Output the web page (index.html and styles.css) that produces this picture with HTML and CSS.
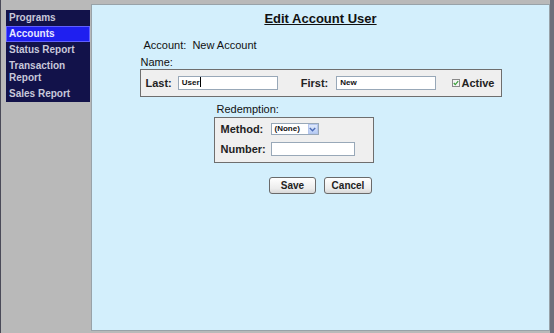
FILE: index.html
```html
<!DOCTYPE html>
<html>
<head>
<meta charset="utf-8">
<link rel="stylesheet" href="styles.css">
</head>
<body>
<div class="frame">
  <nav class="sidebar">
    <ul class="menu">
      <li class="item">Programs</li>
      <li class="item active">Accounts</li>
      <li class="item">Status Report</li>
      <li class="item">Transaction Report</li>
      <li class="item">Sales Report</li>
    </ul>
  </nav>
  <main class="main">
    <h1 class="title">Edit Account User</h1>
    <div class="form">
      <div class="account">Account:&nbsp; New Account</div>
      <div class="group-label">Name:</div>
      <div class="box name-box">
        <span class="lbl">Last:</span>
        <span class="field w100">User<span class="caret"></span></span>
        <span class="lbl first-lbl">First:</span>
        <span class="field w100">New</span>
        <span class="check-wrap">
          <svg class="check" width="8" height="8" viewBox="0 0 8 8">
            <rect x="0.5" y="0.5" width="7" height="7" fill="#f4f4f4" stroke="#8a8a8a"/>
            <path d="M1.8 4 L3.3 5.6 L6.2 2.2" fill="none" stroke="#3aa03a" stroke-width="1.2"/>
          </svg>
          <span class="lbl">Active</span>
        </span>
      </div>
      <div class="redemption">
        <div class="group-label">Redemption:</div>
        <div class="box red-box">
          <div class="row">
            <span class="lbl rlbl">Method:</span>
            <span class="select">
              <span class="sel-text">(None)</span>
              <span class="sel-btn">
                <svg width="7" height="5" viewBox="0 0 7 5"><path d="M0.8 1 L3.5 3.8 L6.2 1" fill="none" stroke="#4d6db8" stroke-width="1.4"/></svg>
              </span>
            </span>
          </div>
          <div class="row">
            <span class="lbl rlbl">Number:</span>
            <span class="field w84"></span>
          </div>
        </div>
      </div>
      <div class="buttons">
        <button class="btn">Save</button>
        <button class="btn cancel">Cancel</button>
      </div>
    </div>
  </main>
</div>
</body>
</html>
```
FILE: styles.css
```css
* { box-sizing: border-box; }
html, body { margin: 0; padding: 0; }
body {
  background: #b9b9b9;
  font-family: "Liberation Sans", Arial, sans-serif;
  width: 554px;
  height: 333px;
  overflow: hidden;
}
.frame {
  display: flex;
  height: 333px;
  padding-top: 4px;
  padding-bottom: 2px;
  border-left: 1px solid #4a4a58;
  border-right: 4px solid #6e6e7c;
}
.sidebar {
  width: 90px;
  flex: none;
  padding: 6px 0 0 5px;
}
.menu {
  list-style: none;
  margin: 0;
  padding: 0;
  width: 84px;
  background: #12124a;
}
.item {
  font-size: 10px;
  font-weight: bold;
  line-height: 12px;
  padding: 2px 3px;
  color: #c8c8da;
}
.item.active {
  background: #1f1ff0;
  color: #e6e6ff;
  box-shadow: inset 0 0 0 1px #6060ff;
}
.main {
  flex: 1;
  background: #d3effc;
  border: 1px solid #98a2a8;
  padding-top: 6px;
}
.title {
  margin: 0;
  text-align: center;
  font-size: 13px;
  line-height: 16px;
  font-weight: bold;
  text-decoration: underline;
  color: #111;
}
.form {
  width: 362px;
  margin: 0 auto;
  font-size: 11px;
  color: #111;
}
.account {
  margin-top: 11px;
  padding-left: 4px;
  line-height: 14px;
}
.group-label {
  margin-top: 4px;
  padding-left: 1px;
  line-height: 13px;
}
.box {
  background: #efefef;
  border: 1px solid #6e6e6e;
}
.name-box {
  display: flex;
  align-items: center;
  height: 28px;
  padding: 0 6px 0 5px;
}
.lbl {
  font-weight: bold;
  color: #222;
  font-size: 11px;
}
.field {
  display: inline-block;
  height: 14px;
  background: #fff;
  border: 1px solid #98a8b8;
  font-size: 8px;
  font-weight: bold;
  line-height: 12px;
  padding-left: 3px;
  color: #111;
}
.caret {
  display: inline-block;
  width: 1px;
  height: 10px;
  background: #000;
  vertical-align: -2px;
}
.w100 { width: 100px; margin-left: 6px; }
.w84 { width: 84px; margin-left: 0; }
.first-lbl { margin-left: 23px; }
.first-lbl + .field { margin-left: 8px; }
.check-wrap {
  margin-left: auto;
  display: flex;
  align-items: center;
  gap: 1px;
}
.check { display: block; }
.redemption {
  margin-left: 74px;
  width: 160px;
}
.redemption .group-label {
  margin-top: 6px;
  padding-left: 3px;
}
.red-box {
  margin-top: 1px;
  height: 46px;
  padding: 1px 0 0 6px;
}
.row {
  display: flex;
  align-items: center;
  height: 20px;
}
.rlbl { width: 50px; }
.select {
  display: inline-flex;
  align-items: center;
  width: 48px;
  height: 12px;
  background: #fff;
  border: 1px solid #98a8b8;
  justify-content: space-between;
}
.sel-text {
  font-size: 8px;
  font-weight: bold;
  padding-left: 3px;
  line-height: 10px;
}
.sel-btn {
  width: 10px;
  height: 10px;
  background: linear-gradient(#dfe9fb, #b8cdf4);
  border: 1px solid #b4c6ee;
  display: flex;
  align-items: center;
  justify-content: center;
}
.sel-btn svg { display: block; }
.buttons {
  display: flex;
  justify-content: center;
  gap: 8px;
  margin-top: 14px;
}
.btn {
  font-family: "Liberation Sans", Arial, sans-serif;
  font-size: 10px;
  font-weight: bold;
  color: #222;
  height: 17px;
  padding: 0;
  width: 47px;
  border: 1px solid #6a6a6a;
  border-radius: 3px;
  background: linear-gradient(#ffffff, #ececec 70%, #d8d8d8);
}
.cancel { width: 48px; }
```
